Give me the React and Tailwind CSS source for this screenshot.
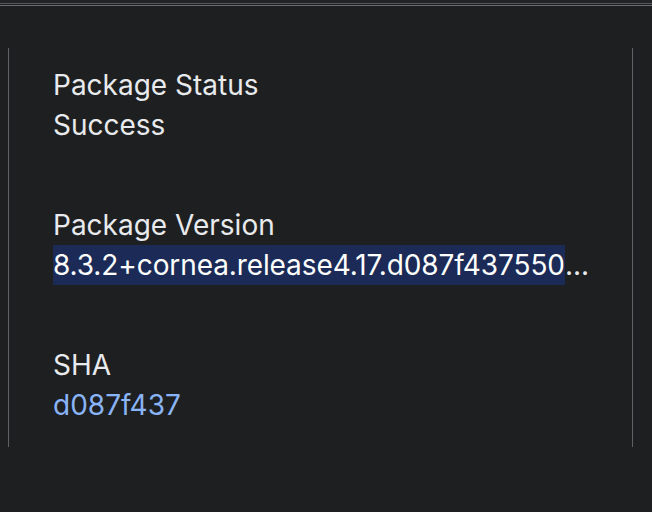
const rows = [
  { label: "Package Status", value: "Success" },
  { label: "Package Version", value: "8.3.2+cornea.release4.17.d087f437550", selected: true },
  { label: "SHA", value: "d087f437", link: true },
];

export default function App() {
  return (
    <div className="w-[652px] h-[512px] bg-[#1e1f21] overflow-hidden font-['Inter','Noto_Sans',sans-serif]">
      <div className="h-[3px] bg-[#232427]" />
      <div className="h-px bg-[#55575b]" />
      <div className="h-px bg-[#1e1f21]" />
      <div className="h-px bg-[#6a6c70]" />
      <div className="pt-[42px] pl-2 pr-[19px]">
        <div className="border-x border-[#5f6165] pt-[17px] pb-[22px] pl-[44px] pr-4 flex flex-col gap-[60px]">
          {rows.map((r) => (
            <div key={r.label} className="flex flex-col text-[28px] leading-[40px]">
              <span className="text-[#e8eaed]">{r.label}</span>
              {r.selected ? (
                <span className="flex text-[#e8eaed] whitespace-nowrap">
                  <span className="bg-[#1b2a56] text-white tracking-[-0.1px]">{r.value}</span>
                  <span>...</span>
                </span>
              ) : (
                <span className={r.link ? "text-[#8ab4f8]" : "text-[#e8eaed]"}>{r.value}</span>
              )}
            </div>
          ))}
        </div>
      </div>
    </div>
  );
}
